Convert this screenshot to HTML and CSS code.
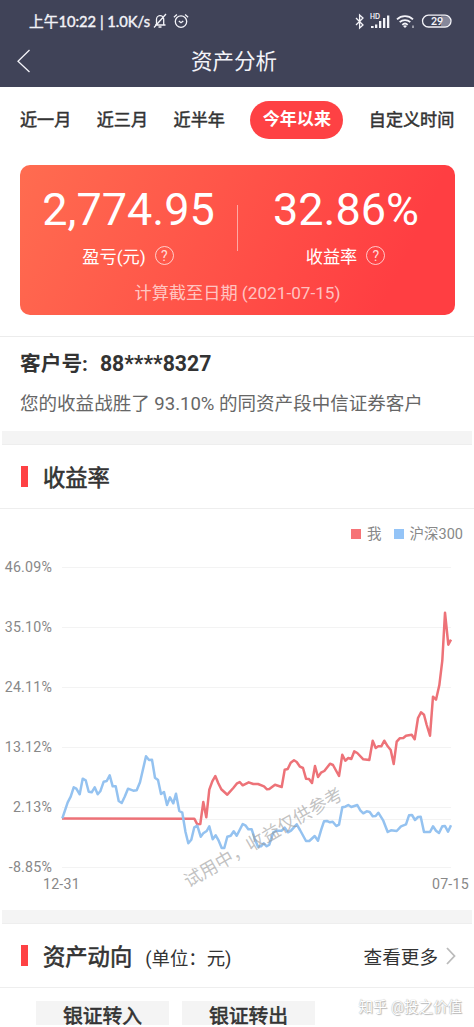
FILE: index.html
```html
<!DOCTYPE html>
<html lang="zh-CN">
<head>
<meta charset="utf-8">
<title>资产分析</title>
<link rel="stylesheet" href="styles.css">
</head>
<body>
<div class="page">
  <header class="header">
    <div class="status">
      <div class="status-left">
        <span class="status-text">上午10:22 | 1.0K/s</span>
        <svg class="bell" width="14" height="16" viewBox="0 0 14 16"><path d="M2 12h10.5M3.5 11.5V6.5a3.6 3.6 0 0 1 7.2-.5v5.5M5.5 14h3M1 14.5 13 1"/></svg>
        <svg class="alarm" width="16" height="16" viewBox="0 0 16 16"><circle cx="8" cy="8.6" r="5.7"/><path d="M5.8 7.9 8 9.7l2.3-1.8M.9 4.2l3-2.7M15.1 4.2l-3-2.7"/></svg>
      </div>
      <svg class="status-right" width="98" height="18" viewBox="0 0 98 18">
        <path class="line" d="m1 6 7 7-3.4 3V3L8 6l-7 7"/>
        <text class="hd" x="15" y="7">HD</text>
        <path class="fill" d="M16 16v-2h2.6v2zM20 16v-3.500h2.300v3.500zM24 16V9h2.300v7zM28 16V6h2.300v10zM32 16V3.500h2.300V16z"/>
        <path class="line wide" d="M42 7.300a11.500 11.500 0 0 1 16 0M44.700 10.200a7.700 7.700 0 0 1 10.600 0M47.300 12.800a4 4 0 0 1 5.400 0"/>
        <path class="fill" d="m50 16-2-2q2-1.400 4 0zM57.500 13.500h1v2.500h-1z"/>
        <path class="level" d="M86 4.200h5.500a5 5 0 0 1 0 9.800H86z"/>
        <rect class="line" x="67.500" y="3.200" width="28.500" height="11.800" rx="5.900"/>
        <text class="pct" x="82" y="12.700">29</text>
      </svg>
    </div>
    <div class="nav">
      <svg class="back" width="14" height="24" viewBox="0 0 14 24"><path d="M12.500 1 1 12.300 12.500 23"/></svg>
      <h1 class="nav-title">资产分析</h1>
    </div>
  </header>

  <nav class="tabs">
    <span class="tab">近一月</span>
    <span class="tab">近三月</span>
    <span class="tab">近半年</span>
    <span class="tab active">今年以来</span>
    <span class="tab">自定义时间</span>
  </nav>

  <section class="card">
    <div class="stats">
      <div class="stat profit">
        <div class="value">2,774.95</div>
        <div class="label">盈亏(元)<span class="help">?</span></div>
      </div>
      <div class="divider"></div>
      <div class="stat rate">
        <div class="value">32.86%</div>
        <div class="label">收益率<span class="help">?</span></div>
      </div>
    </div>
    <div class="date">计算截至日期 (2021-07-15)</div>
  </section>

  <section class="client">
    <div class="client-no">客户号:<span class="client-id">88****8327</span></div>
    <div class="client-rank">您的收益战胜了 93.10% 的同资产段中信证券客户</div>
  </section>
  <div class="band"></div>

  <section>
    <div class="section-head first"><span class="mark"></span><h2>收益率</h2></div>
    <div class="legend">
      <span class="swatch me"></span><span>我</span>
      <span class="swatch index"></span><span>沪深300</span>
    </div>
    <svg class="chart" width="474" height="360" viewBox="0 550 474 360">
      <path class="grid" d="M62 567.500H451M62 627.500H451M62 687.500H451M62 747.500H451M62 807.500H451M62 819.500H451M62 867.500H451"/>
      <g class="axis">
        <g text-anchor="end">
          <text x="52" y="572">46.09%</text>
          <text x="52" y="632">35.10%</text>
          <text x="52" y="692">24.11%</text>
          <text x="52" y="752">13.12%</text>
          <text x="52" y="812">2.13%</text>
          <text x="52" y="872">-8.85%</text>
        </g>
        <text x="43" y="889">12-31</text>
        <text x="432" y="889">07-15</text>
      </g>
      <polyline class="series me-line" points="62,818.5 194.3,818.7 197.3,824.3 200.3,824 203.3,802 206.3,817.3 209.3,789.7 212.3,781.3 215.3,776 218.3,783.3 221.3,789.3 227.3,794.7 233.3,788 236.7,783.7 239.7,782 242.7,785.3 248.7,782.3 253.3,784 258,784 264,786.3 267,789.3 269.3,789 275,784.7 281.7,787 284.7,769.7 287.7,769 290.7,762.7 294,760.3 296.7,762 300,766.7 303,768 306,778.7 309,779 312,783 315,766 318,777 321,772.7 324.3,771 330,763.7 333,765 339,776 342.3,754.7 345.3,760.7 348.3,758 351.3,759 354.3,751.3 357.3,753 363.3,759.3 369.3,760 372.7,740.7 375.7,748 378.3,746.3 381.3,746.3 384.3,740.7 387.7,746.3 390.7,750 393.7,764 396.7,741.7 399.7,738.3 403.3,738 406,735.7 411.7,734.7 414.7,739.3 418,718 421,712.3 424,714.7 426.7,725 430,735.7 433,696.7 436,699.7 439.3,685.3 442.3,660.7 445,612.7 448.3,644.7 451,639.7"/>
      <polyline class="series index-line" points="62.3,818.3 67.7,802.3 70.7,796.7 73.7,787.3 76.3,788.7 79.7,794.3 82.7,778.7 85.7,780.3 88.7,791.7 91.7,792.3 94.7,787.3 97.7,794.3 100.3,791.3 103.7,781.7 106.7,781 109.7,775.3 112.7,786.3 115.7,786.3 118.7,801 121.7,803 124.7,796.7 128,788.7 133.3,790.7 136.7,790.3 140,782.3 146,756.3 149,760 152,759.7 155,777.7 158,780 161,794 164,792 167,805 170,797.3 173.3,803.3 176,793.7 179.3,811 182.3,812.7 185.5,832 188.3,843.3 191.3,839.7 194.3,827.3 197.3,825.7 200.7,836.7 203.3,833.3 206.7,831 209.3,826.3 212.7,839.3 215.7,835.3 218.7,840.7 221.7,848 224.3,848 227.3,836.7 230.7,835.7 233.7,831.3 236.7,835.7 242.7,824 245.7,825.7 248.3,829.3 251.7,829.3 254.7,838.7 258,846.7 261,846.3 263.7,843.3 266.7,846.3 269.3,844.7 273.3,832.3 276.7,830.7 281.7,830.7 284.7,827.7 288,832.3 291,830.7 296.7,824.3 300,830 306,841 309.3,841 314.7,836 318,840.7 321.3,829.3 324,821.3 327,821 330,822.3 332.7,821.7 336.3,826 339,824.7 342.3,807.3 345.3,806.7 348.3,805 351.3,807 357.3,805 360.3,810.3 363.3,813.3 366.7,811.3 369.7,812 372.7,816.3 375.7,816 378.3,812.7 383.3,820.7 387.7,832 391,830.3 396.7,831 401,826.3 406,824.3 409,815.3 412,815 415,820 418,817 420.7,816.7 424,832 430,832 433,826.3 436,830.7 439,833 442.3,826.3 445,826 448,831.7 451,825.3"/>
      <text class="trial" transform="translate(188.500 888) rotate(-30)">试用中，收益仅供参考</text>
    </svg>
  </section>
  <div class="band second"></div>

  <section>
    <div class="section-head last">
      <span class="mark"></span><h2>资产动向</h2><span class="unit">(单位：元)</span>
      <span class="more">查看更多</span>
      <svg class="chevron" width="10" height="18" viewBox="0 0 10 18"><path d="m1 1 7.500 8L1 17"/></svg>
    </div>
    <div class="cells">
      <div class="cell">银证转入</div>
      <div class="cell">银证转出</div>
    </div>
  </section>
  <div class="credit">知乎 @投之价值</div>
</div>
</body>
</html>
```

FILE: styles.css
```css
* { box-sizing: border-box; }
body {
  margin: 0;
  background: #fff;
  color: #333;
  font-family: Roboto, "Noto Sans CJK SC", sans-serif;
}
.page {
  position: relative;
  width: 474px;
  height: 1027px;
  overflow: hidden;
}
h1, h2 { margin: 0; }
svg { display: block; flex: none; }

.header {
  height: 87px;
  background: #404358;
  color: #f3f3f8;
}
.status {
  height: 42px;
  padding: 0 21px 0 29px;
  display: flex;
  align-items: center;
  justify-content: space-between;
}
.status-left { display: flex; align-items: center; }
.status-text {
  font: 400 14.7px/20px Lato, "Noto Sans CJK SC", sans-serif;
  -webkit-text-stroke: .4px;
  white-space: nowrap;
  width: 119px;
}
.bell, .alarm, .back { fill: none; stroke: #f3f3f8; stroke-width: 1.3; }
.bell { margin-left: 5px; }
.alarm { margin-left: 6px; }
.status-right .line { fill: none; stroke: #f3f3f8; stroke-width: 1.3; }
.status-right .wide { stroke-width: 1.8; }
.status-right .fill { fill: #f3f3f8; }
.status-right .level { fill: #85879a; }
.hd { font: 700 6.5px Lato, sans-serif; fill: #f3f3f8; }
.pct { font: 700 10.5px Lato, sans-serif; fill: #f3f3f8; text-anchor: middle; }
.nav {
  display: grid;
  grid-template-columns: 57px 1fr 63px;
  align-items: center;
  height: 37px;
}
.back { margin-left: 17px; }
.nav-title { padding-top: 2px; text-align: center; font-size: 21.5px; font-weight: 400; line-height: 30px; }

.tabs {
  display: flex;
  align-items: center;
  height: 78px;
  padding: 0 0 12px 20px;
  font-size: 17.1px;
  white-space: nowrap;
}
.tab {
  flex: none;
  margin-right: 25.5px;
  line-height: 38px;
  margin-top: -1px;
  -webkit-text-stroke: .5px;
}
.tab.active {
  width: 93px;
  height: 38px;
  margin-left: 0;
  margin-top: 0;
  border-radius: 19px;
  background: #fe4144;
  color: #fff;
  font-weight: 700;
  line-height: 37px;
  text-align: center;
  -webkit-text-stroke: 0;
}

.card {
  width: 435px;
  height: 150px;
  margin: 0 0 0 20px;
  padding-top: 19px;
  border-radius: 10px;
  background: linear-gradient(115deg, #ff6c50, #ff3e42 85%);
  color: #fff;
}
.stats { display: grid; grid-template-columns: 217px 1px 216px; }
.divider { height: 46px; margin-top: 21px; background: rgba(255,255,255,.5); }
.stat { text-align: center; }
.value { font-size: 45px; line-height: 52px; }
.label {
  display: flex;
  align-items: center;
  justify-content: center;
  height: 24px;
  margin-top: 7px;
  padding-right: 1px;
  font-size: 17.2px;
}
.help {
  width: 19px;
  height: 19px;
  margin-left: 9px;
  border: 1px solid rgba(255,255,255,.7);
  border-radius: 50%;
  color: rgba(255,255,255,.8);
  font-size: 14px;
  line-height: 18px;
  text-align: center;
}
.date {
  margin-top: 14px;
  font-size: 17.2px;
  line-height: 24px;
  text-align: center;
  color: rgba(255,255,255,.68);
}

.client {
  height: 95px;
  margin-top: 21px;
  padding: 12px 0 0 20px;
  border-top: 1px solid #ececec;
}
.client-no { font-size: 20.7px; line-height: 30px; font-weight: 700; }
.client-id { margin-left: 12px; font-size: 21.2px; }
.client-rank { margin-top: 10px; font-size: 18.55px; line-height: 30px; color: #666; white-space: nowrap; }
.band { height: 14px; margin: 0 2px; background: #f4f4f4; border-bottom: 1px solid #eee; }

.section-head {
  display: flex;
  align-items: center;
  height: 64px;
  padding-left: 21px;
  border-bottom: 1px solid #eee;
}
.mark { width: 7px; height: 21px; background: #fe4144; }
.section-head h2 {
  margin-left: 15px;
  padding-top: 2px;
  font-size: 22.3px;
  font-weight: 400;
  line-height: 30px;
  -webkit-text-stroke: .6px;
}
.legend {
  display: flex;
  align-items: center;
  height: 41px;
  padding: 9px 0 0 351px;
  font-size: 14.5px;
  line-height: 18px;
  color: #888;
}
.legend span:not(.swatch) { margin-top: 1px; }
.swatch { width: 10px; height: 10px; margin-right: 6px; }
.me { background: #f67377; }
.index { margin-left: 12px; background: #94c4f7; }
.grid { stroke: #f3f3f3; }
.axis { font-size: 14.2px; fill: #888; letter-spacing: .2px; }
.series { fill: none; stroke-width: 2.5; stroke-linejoin: round; }
.me-line { stroke: #ed7278; }
.index-line { stroke: #94c2f0; }
.trial { font-size: 18px; fill: #999; fill-opacity: .6; }

.unit { margin-left: 13px; padding-top: 2px; font-size: 18.4px; }
.more { margin-left: auto; font-size: 18.6px; }
.chevron { margin: 0 18px 0 8px; fill: none; stroke: #bbb; stroke-width: 1.8; }
.cells { display: flex; gap: 13px; padding: 13px 0 0 36px; }
.cell {
  width: 133px;
  height: 24px;
  overflow: hidden;
  background: #f4f4f4;
  font-size: 19.8px;
  line-height: 31px;
  text-align: center;
  -webkit-text-stroke: .6px;
}
/* Author credit laid over the page corner */
.credit {
  position: absolute;
  right: 12px;
  bottom: 9px;
  font-size: 14.5px;
  line-height: 20px;
  color: #fff;
  text-shadow: 0 0 1px #999, 1px 1px 1px #bbb;
}
```
